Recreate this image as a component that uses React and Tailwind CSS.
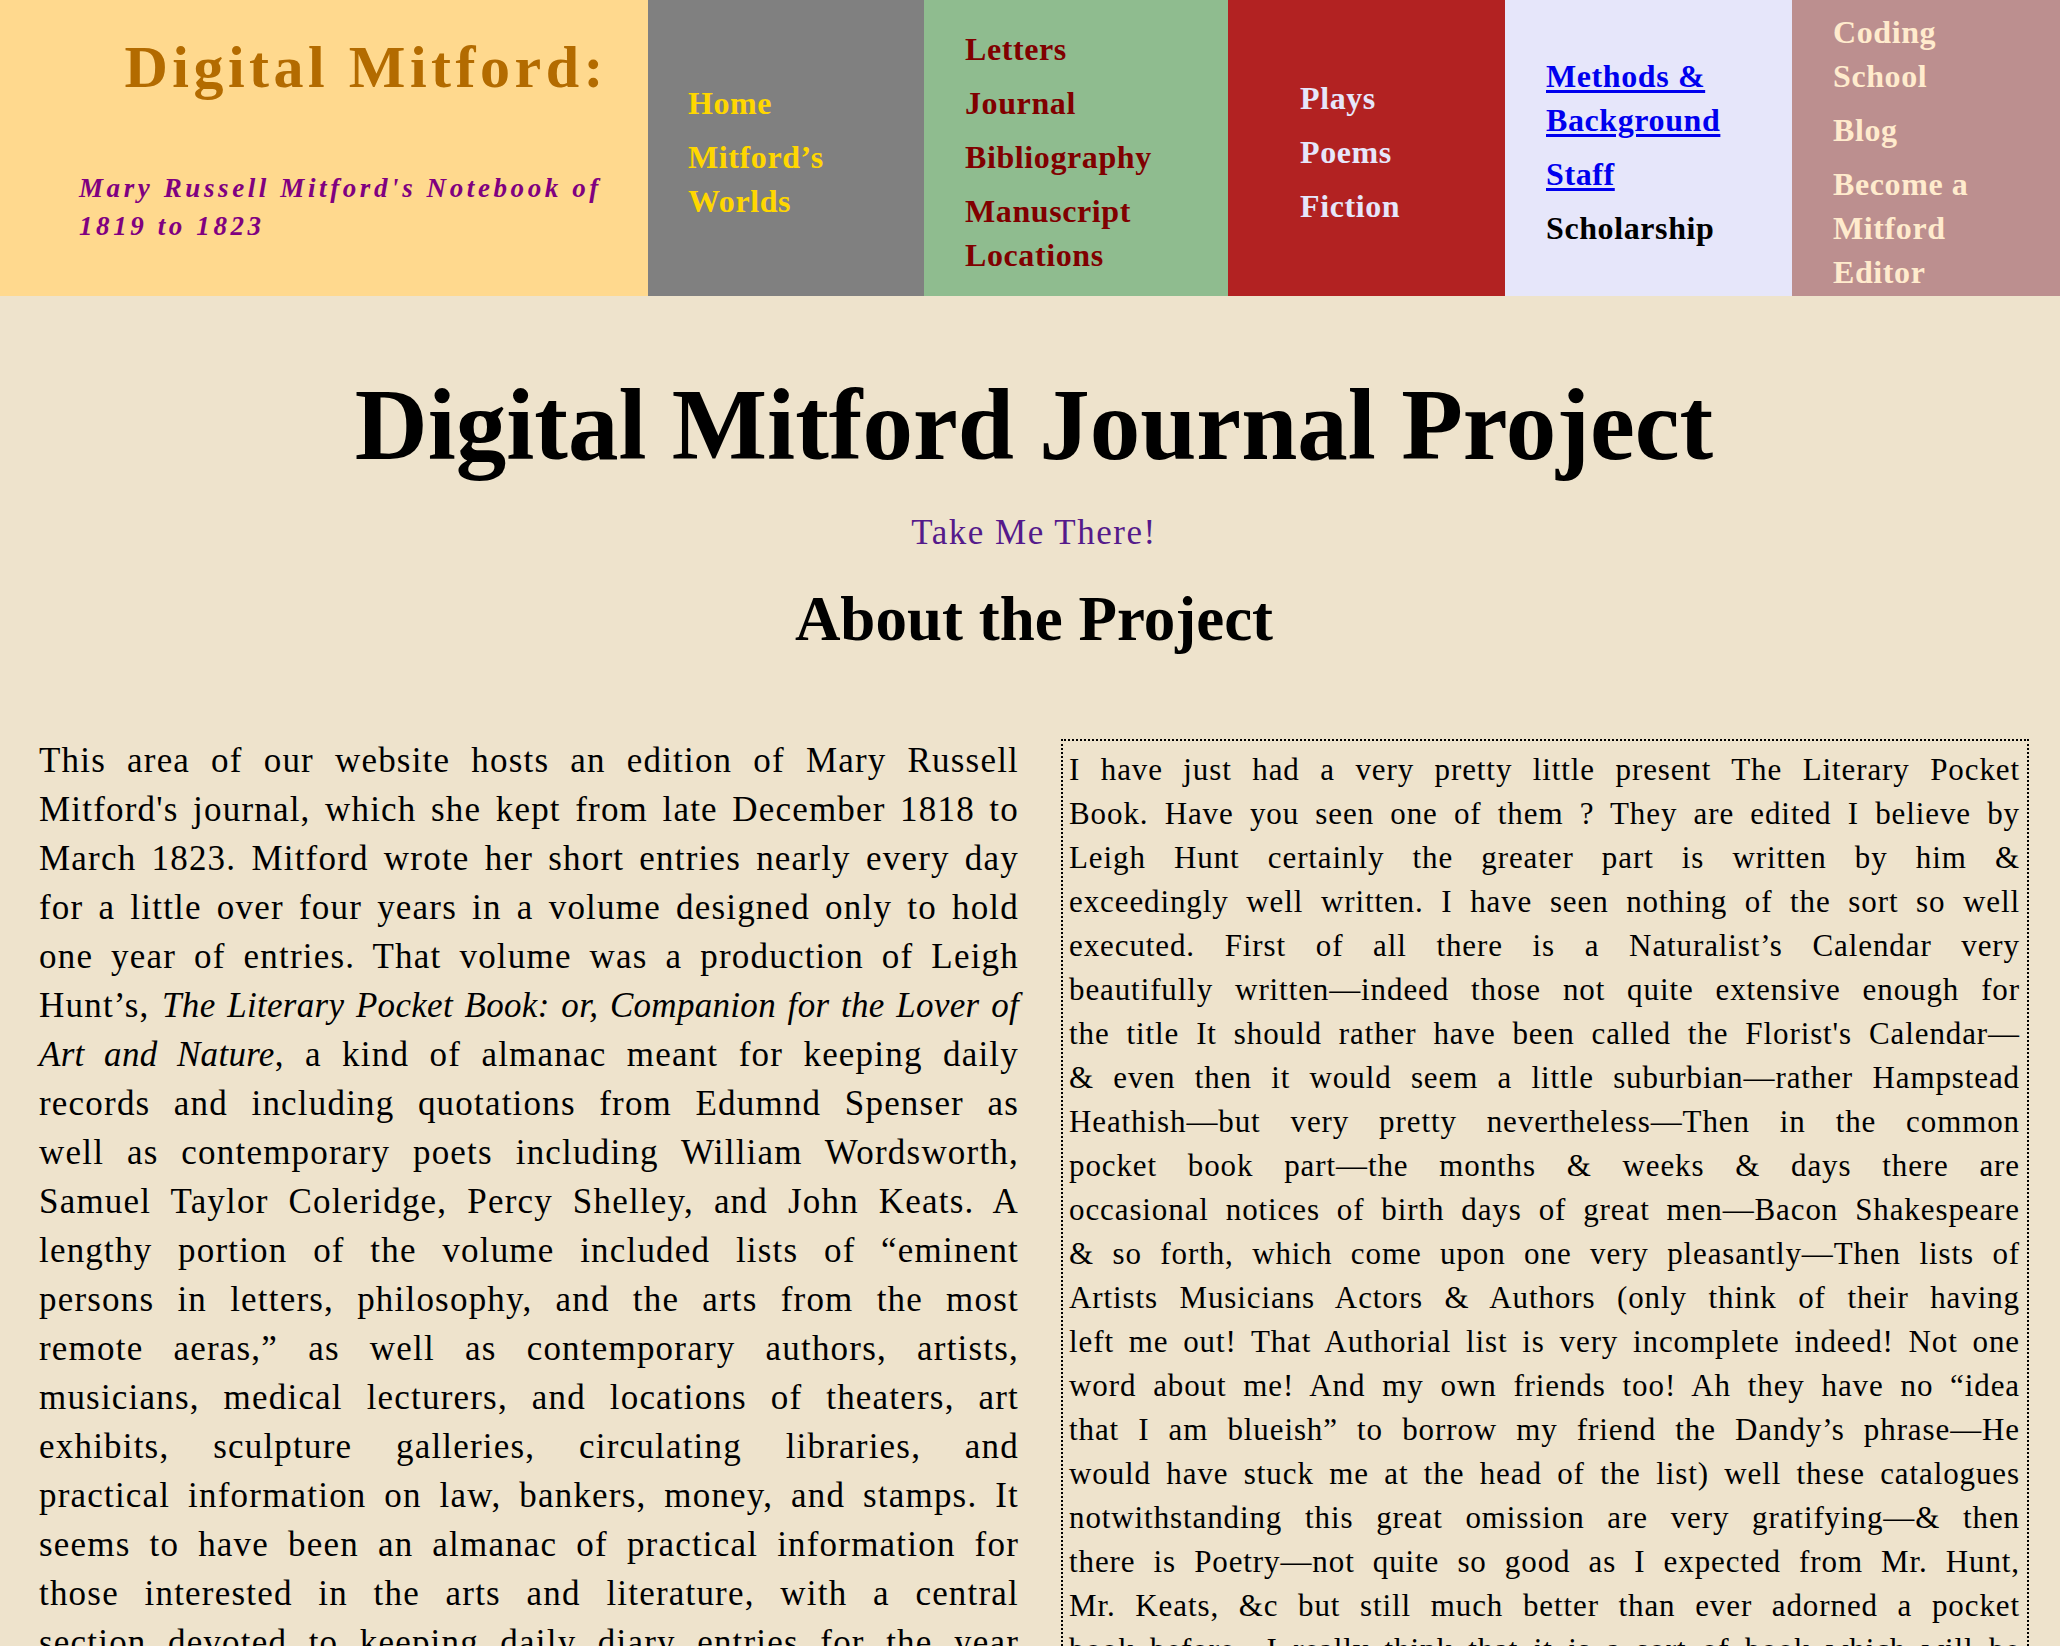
import React from "react";

const navCols = [
  {
    width: "w-[276px]",
    bg: "bg-[#808080]",
    pad: "pl-[40px]",
    items: [
      { lines: ["Home"], color: "text-[#ffd700]" },
      { lines: ["Mitford’s", "Worlds"], color: "text-[#ffd700]" },
    ],
  },
  {
    width: "w-[304px]",
    bg: "bg-[#8fbc8f]",
    pad: "pl-[41px]",
    items: [
      { lines: ["Letters"], color: "text-[#800000]" },
      { lines: ["Journal"], color: "text-[#800000]" },
      { lines: ["Bibliography"], color: "text-[#800000]" },
      { lines: ["Manuscript", "Locations"], color: "text-[#800000]" },
    ],
  },
  {
    width: "w-[277px]",
    bg: "bg-[#b22222]",
    pad: "pl-[72px]",
    items: [
      { lines: ["Plays"], color: "text-[#e6e6fa]" },
      { lines: ["Poems"], color: "text-[#e6e6fa]" },
      { lines: ["Fiction"], color: "text-[#e6e6fa]" },
    ],
  },
  {
    width: "w-[287px]",
    bg: "bg-[#e6e6fa]",
    pad: "pl-[41px]",
    items: [
      { lines: ["Methods &", "Background"], color: "text-[#0000ee]", link: true },
      { lines: ["Staff"], color: "text-[#0000ee]", link: true },
      { lines: ["Scholarship"], color: "text-black" },
    ],
  },
  {
    width: "w-[268px]",
    bg: "bg-[#bc8f8f]",
    pad: "pl-[41px]",
    items: [
      { lines: ["Coding", "School"], color: "text-[#ffebcd]" },
      { lines: ["Blog"], color: "text-[#ffebcd]" },
      { lines: ["Become a", "Mitford", "Editor"], color: "text-[#ffebcd]" },
    ],
  },
];

const aboutLines = [
  ["This area of our website hosts an edition of Mary Russell"],
  ["Mitford's journal, which she kept from late December 1818 to"],
  ["March 1823. Mitford wrote her short entries nearly every day"],
  ["for a little over four years in a volume designed only to hold"],
  ["one year of entries. That volume was a production of Leigh"],
  ["Hunt’s, ", { i: "The Literary Pocket Book: or, Companion for the Lover of" }],
  [{ i: "Art and Nature" }, ", a kind of almanac meant for keeping daily"],
  ["records and including quotations from Edumnd Spenser as"],
  ["well as contemporary poets including William Wordsworth,"],
  ["Samuel Taylor Coleridge, Percy Shelley, and John Keats. A"],
  ["lengthy portion of the volume included lists of “eminent"],
  ["persons in letters, philosophy, and the arts from the most"],
  ["remote aeras,” as well as contemporary authors, artists,"],
  ["musicians, medical lecturers, and locations of theaters, art"],
  ["exhibits, sculpture galleries, circulating libraries, and"],
  ["practical information on law, bankers, money, and stamps. It"],
  ["seems to have been an almanac of practical information for"],
  ["those interested in the arts and literature, with a central"],
  ["section devoted to keeping daily diary entries for the year"],
];

const letterLines = [
  "I have just had a very pretty little present The Literary Pocket",
  "Book. Have you seen one of them ? They are edited I believe by",
  "Leigh Hunt certainly the greater part is written by him &",
  "exceedingly well written. I have seen nothing of the sort so well",
  "executed. First of all there is a Naturalist’s Calendar very",
  "beautifully written—indeed those not quite extensive enough for",
  "the title It should rather have been called the Florist's Calendar—",
  "& even then it would seem a little suburbian—rather Hampstead",
  "Heathish—but very pretty nevertheless—Then in the common",
  "pocket book part—the months & weeks & days there are",
  "occasional notices of birth days of great men—Bacon Shakespeare",
  "& so forth, which come upon one very pleasantly—Then lists of",
  "Artists Musicians Actors & Authors (only think of their having",
  "left me out! That Authorial list is very incomplete indeed! Not one",
  "word about me! And my own friends too! Ah they have no “idea",
  "that I am blueish” to borrow my friend the Dandy’s phrase—He",
  "would have stuck me at the head of the list) well these catalogues",
  "notwithstanding this great omission are very gratifying—& then",
  "there is Poetry—not quite so good as I expected from Mr. Hunt,",
  "Mr. Keats, &c but still much better than ever adorned a pocket",
  "book before—I really think that it is a sort of book which will be",
];

const NavColumn = ({ col }) => (
  <div className={`${col.width} ${col.bg} ${col.pad} shrink-0 flex items-center pt-2`}>
    <ul className="flex flex-col gap-[10px] text-[32px] leading-[44px] font-bold tracking-[0.6px]">
      {col.items.map((item, i) => (
        <li key={i}>
          <a
            href="#"
            className={`${item.color} ${
              item.link ? "underline decoration-[3px] underline-offset-[3px]" : "no-underline"
            }`}
          >
            {item.lines.map((line, j) => (
              <React.Fragment key={j}>
                {j > 0 && <br />}
                {line}
              </React.Fragment>
            ))}
          </a>
        </li>
      ))}
    </ul>
  </div>
);

const JustifiedLine = ({ parts }) => (
  <span className="block text-justify [text-align-last:justify]">
    {parts.map((p, i) =>
      typeof p === "string" ? (
        <React.Fragment key={i}>{p}</React.Fragment>
      ) : (
        <em key={i} className="tracking-[0.3px]">
          {p.i}
        </em>
      )
    )}
  </span>
);

export default function App() {
  return (
    <div className="h-screen overflow-hidden bg-[#eee3cc] text-black font-['Liberation_Serif',serif]">
      {/* top banner */}
      <header className="flex h-[296px]">
        <div className="w-[648px] shrink-0 bg-[#ffd98e] pt-[37px]">
          <div className="pr-[40px] text-right text-[60px] leading-[60px] font-bold tracking-[4.5px] text-[#b36b00]">
            Digital Mitford:
          </div>
          <p className="mt-[72px] pl-[79px] text-[27px] leading-[38px] font-bold italic tracking-[3.6px] text-[#800080]">
            Mary Russell Mitford's Notebook of
            <br />
            1819 to 1823
          </p>
        </div>
        {navCols.map((col, i) => (
          <NavColumn key={i} col={col} />
        ))}
      </header>

      <main className="pl-[39px] pr-[31px] pt-[79px]">
        <h1 className="text-center text-[101px] leading-[100px] font-bold">
          Digital Mitford Journal Project
        </h1>
        <p className="mt-[38px] text-center text-[35px] leading-[40px] tracking-[1.5px]">
          <a href="#" className="text-[#551a8b]">
            Take Me There!
          </a>
        </p>
        <h2 className="mt-[31px] text-center text-[63px] leading-[70px] font-bold">
          About the Project
        </h2>

        <div className="mt-[82px] flex items-start gap-[42px]">
          <div className="w-[980px] shrink-0 text-[35px] leading-[49px] tracking-[1.2px]">
            {aboutLines.map((parts, i) => (
              <JustifiedLine key={i} parts={parts} />
            ))}
          </div>
          <div className="mt-[3px] flex-1 border-2 border-dotted border-black pl-[6px] pr-[7px] pt-[7px] text-[31px] leading-[44px] tracking-[0.9px]">
            {letterLines.map((line, i) => (
              <JustifiedLine key={i} parts={[line]} />
            ))}
          </div>
        </div>
      </main>
    </div>
  );
}
